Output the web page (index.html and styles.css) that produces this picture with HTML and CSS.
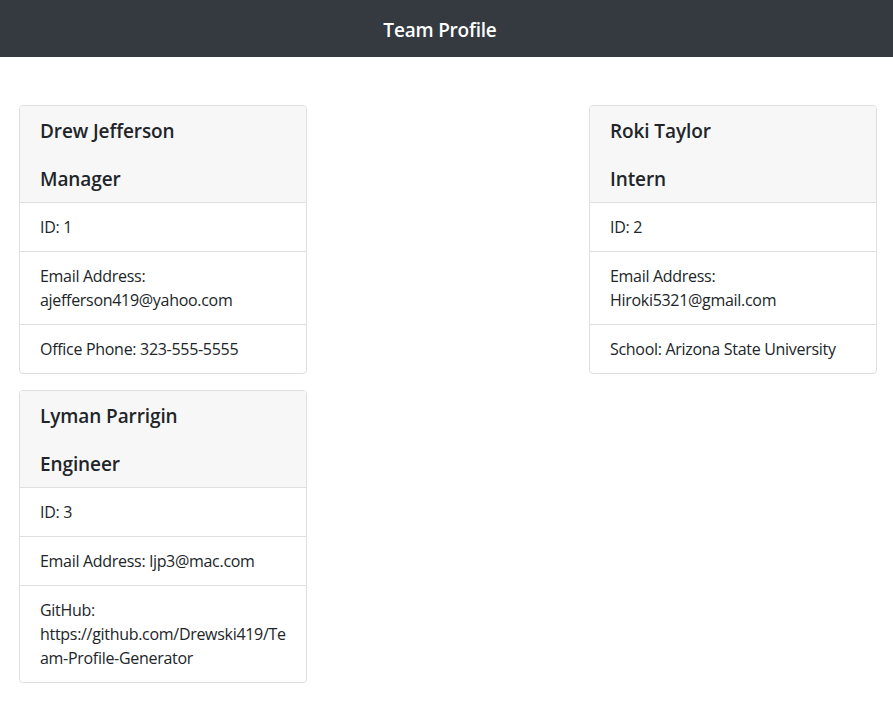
FILE: index.html
```html
<!DOCTYPE html>
<html lang="en">
<head>
<meta charset="UTF-8">
<title>Team Profile</title>
<link rel="stylesheet" href="styles.css">
</head>
<body>
<header class="topbar">
  <h1 class="topbar-title">Team Profile</h1>
</header>
<main class="team">
  <section class="card">
    <div class="card-header">
      <h2 class="card-name">Drew Jefferson</h2>
      <h2 class="card-role">Manager</h2>
    </div>
    <ul class="card-list">
      <li class="card-item">ID: 1</li>
      <li class="card-item">Email Address: ajefferson419@yahoo.com</li>
      <li class="card-item">Office Phone: 323-555-5555</li>
    </ul>
  </section>
  <section class="card">
    <div class="card-header">
      <h2 class="card-name">Roki Taylor</h2>
      <h2 class="card-role">Intern</h2>
    </div>
    <ul class="card-list">
      <li class="card-item">ID: 2</li>
      <li class="card-item">Email Address: Hiroki5321@gmail.com</li>
      <li class="card-item">School: Arizona State University</li>
    </ul>
  </section>
  <section class="card">
    <div class="card-header">
      <h2 class="card-name">Lyman Parrigin</h2>
      <h2 class="card-role">Engineer</h2>
    </div>
    <ul class="card-list">
      <li class="card-item">ID: 3</li>
      <li class="card-item">Email Address: ljp3@mac.com</li>
      <li class="card-item">GitHub: https://github.com/Drewski419/Team-Profile-Generator</li>
    </ul>
  </section>
</main>
</body>
</html>
```
FILE: styles.css
```css
* { box-sizing: border-box; }
html, body {
  margin: 0;
  padding: 0;
  background: #ffffff;
  color: #212529;
  font-family: "Open Sans", "Noto Sans", sans-serif;
  font-size: 16px;
  line-height: 24px;
}
.topbar {
  background: #343a40;
  height: 57px;
  display: flex;
  align-items: center;
  justify-content: center;
  padding: 2px 13px 0 0;
}
.topbar-title {
  margin: 0;
  color: #ffffff;
  font-size: 19px;
  font-weight: 600;
  line-height: 24px;
  letter-spacing: -0.2px;
}
.team {
  display: flex;
  flex-wrap: wrap;
  justify-content: space-between;
  align-items: flex-start;
  padding: 48px 16px 0 19px;
}
.card {
  width: 288px;
  border: 1px solid #dfdfdf;
  border-radius: 4px;
  margin-bottom: 16px;
  overflow: hidden;
  background: #fff;
}
.card-header {
  background: #f7f7f7;
  padding: 13px 20px 11px;
  border-bottom: 1px solid #dfdfdf;
}
.card-name, .card-role {
  margin: 0;
  font-size: 19px;
  font-weight: 600;
  line-height: 24px;
  letter-spacing: -0.1px;
}
.card-name { margin-bottom: 24px; }
.card-list {
  list-style: none;
  margin: 0;
  padding: 0;
}
.card-item {
  padding: 12px 20px;
  border-bottom: 1px solid #dfdfdf;
  overflow-wrap: break-word;
  font-size: 16px;
  letter-spacing: -0.3px;
}
.card-item:last-child { border-bottom: none; }
```
